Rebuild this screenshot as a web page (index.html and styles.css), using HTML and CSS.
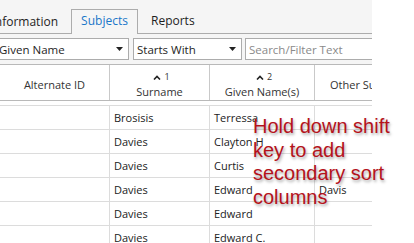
FILE: index.html
```html
<!DOCTYPE html>
<html lang="en">
<head>
    <meta charset="UTF-8">
    <title>Subjects</title>
    <link rel="stylesheet" href="styles.css">
</head>
<body>
    <div class="app">
        <div class="top">
            <div class="tabs">
                <div class="tab tab-first">Information</div>
                <div class="tab active">Subjects</div>
                <div class="tab">Reports</div>
            </div>
            <div class="toolbar">
                <div class="combo combo-field">
                    <span>Given Name</span>
                    <svg class="arrow" width="7" height="4" viewBox="0 0 7 4"><path d="M0 0H7L3.5 4Z" fill="#222"/></svg>
                </div>
                <div class="combo combo-op">
                    <span>Starts With</span>
                    <svg class="arrow" width="7" height="4" viewBox="0 0 7 4"><path d="M0 0H7L3.5 4Z" fill="#222"/></svg>
                </div>
                <div class="search">Search/Filter Text</div>
            </div>
        </div>

        <div class="grid">
            <div class="grid-head">
                <div class="hcell">Alternate ID</div>
                <div class="hcell">
                    <div class="sort"><svg width="8" height="5" viewBox="0 0 8 5"><path d="M1 4.5L4 1.5L7 4.5" fill="none" stroke="#222" stroke-width="1.6"/></svg><sup>1</sup></div>
                    <div>Surname</div>
                </div>
                <div class="hcell">
                    <div class="sort"><svg width="8" height="5" viewBox="0 0 8 5"><path d="M1 4.5L4 1.5L7 4.5" fill="none" stroke="#222" stroke-width="1.6"/></svg><sup>2</sup></div>
                    <div>Given Name(s)</div>
                </div>
                <div class="hcell hcell-last">Other Surname</div>
            </div>
            <div class="grid-body" id="rows"></div>
        </div>

        <div class="hint">Hold down shift<br>key to add<br>secondary sort<br>columns</div>
    </div>

    <script>
        const rows = [
            ['', 'Brosisis', 'Terressa', ''],
            ['', 'Davies', 'Clayton H', ''],
            ['', 'Davies', 'Curtis', ''],
            ['', 'Davies', 'Edward', 'Davis'],
            ['', 'Davies', 'Edward', ''],
            ['', 'Davies', 'Edward C.', '']
        ];
        const body = document.getElementById('rows');
        rows.forEach(r => {
            r.forEach(v => {
                body.innerHTML += `<div class="cell">${v}</div>`;
            });
        });
    </script>
</body>
</html>
```

FILE: styles.css
```css
body {
    margin: 0;
    background: #ffffff;
    font-family: 'Open Sans', 'Noto Sans', sans-serif;
    font-size: 11px;
    color: #1e1e1e;
}

.app {
    position: relative;
    width: 372px;
    height: 243px;
    background: #ffffff;
}

.top {
    height: 64px;
    background: #f5f5f5;
    overflow: hidden;
}

/* tab strip */
.tabs {
    display: flex;
    align-items: flex-end;
    height: 33px;
    border-bottom: 1px solid #acacac;
}

.tab {
    flex: none;
    height: 24px;
    line-height: 22px;
    padding: 0 12px;
    border: 1px solid transparent;
    border-bottom: none;
    margin-bottom: -1px;
    color: #1e1e1e;
    font-size: 12px;
}

.tab-first {
    margin-left: -10px;
    width: 81px;
    box-sizing: border-box;
    padding: 0 12px 0 0;
    text-align: right;
}

.tab.active {
    width: 67px;
    box-sizing: border-box;
    padding: 0;
    text-align: center;
    height: 25px;
    color: #1a77c9;
    background: #f5f5f5;
    border-color: #acacac;
}

/* filter row */
.toolbar {
    display: flex;
    gap: 4px;
    padding-top: 4px;
}

.combo, .search {
    flex: none;
    height: 22px;
    box-sizing: border-box;
    border: 1px solid #acacac;
    background: #ffffff;
    display: flex;
    align-items: center;
    font-size: 11.5px;
}

.combo {
    justify-content: space-between;
    padding: 0 5px 0 3px;
}

.combo-field {
    margin-left: -10px;
    width: 139px;
    padding-left: 8px;
}

.combo-op {
    width: 109px;
}

.search {
    width: 150px;
    margin-left: -1px;
    padding-left: 3px;
    color: #8a8a8a;
}

/* data grid */
.grid {
    width: 372px;
    height: 179px;
    overflow: hidden;
}

.grid-head, .grid-body {
    display: grid;
    grid-template-columns: 110px 100px 105px 1fr;
}

.grid-head {
    height: 37px;
    box-sizing: border-box;
    border-top: 1px solid #b9b9b9;
    border-bottom: 1px solid #b9b9b9;
    margin-bottom: 4px;
}

.hcell {
    border-right: 1px solid #c9c9c9;
    display: flex;
    flex-direction: column;
    align-items: center;
    justify-content: center;
    padding-top: 4px;
    color: #333;
    font-size: 11px;
    line-height: 15px;
    white-space: nowrap;
    overflow: hidden;
}

.hcell-last {
    border-right: none;
    align-items: flex-start;
    padding-left: 15px;
}

.sort {
    display: flex;
    align-items: center;
    height: 14px;
    margin-left: 4px;
}

.sort sup {
    font-size: 9px;
    margin-left: 3px;
    line-height: 9px;
    position: relative;
    top: -1px;
}

.cell {
    height: 24px;
    box-sizing: border-box;
    border-top: 1px solid #dcdcdc;
    border-right: 1px solid #dcdcdc;
    padding-left: 4px;
    line-height: 23px;
    font-size: 11px;
    color: #222;
    white-space: nowrap;
}

.cell:nth-child(4n) {
    border-right: none;
}

/* sort hint over the grid */
.hint {
    position: absolute;
    left: 253px;
    top: 115px;
    font-family: 'Liberation Sans', Arial, sans-serif;
    font-size: 20px;
    line-height: 23.7px;
    color: #b5121b;
    text-shadow: 1px 2px 3px rgba(0, 0, 0, 0.35);
    white-space: nowrap;
}
```
